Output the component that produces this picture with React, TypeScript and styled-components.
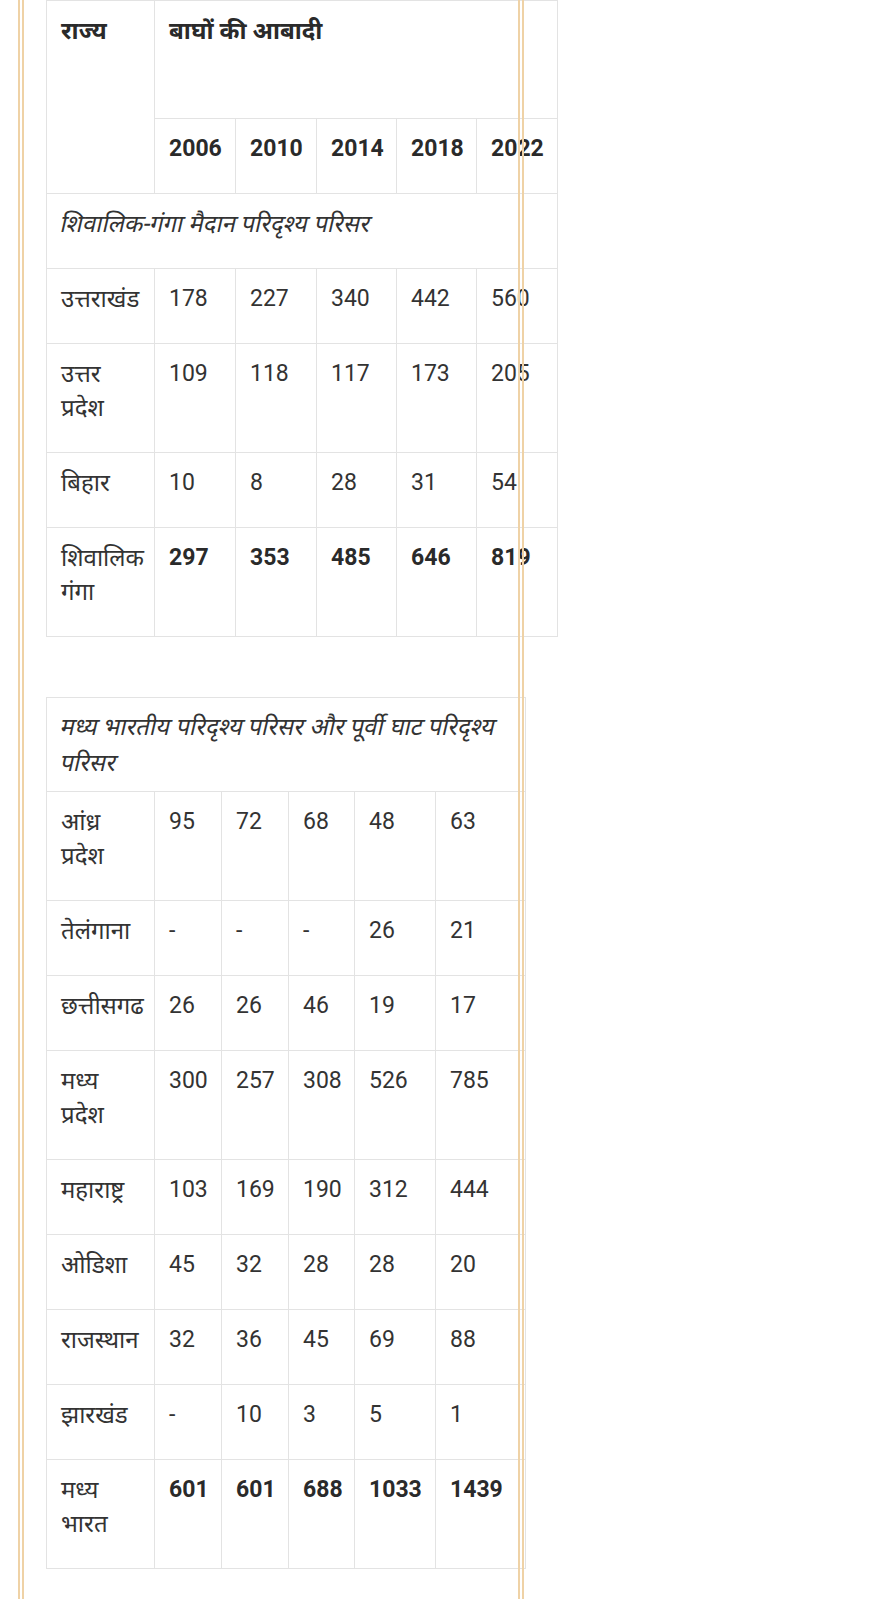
import React from "react";
import styled, { createGlobalStyle } from "styled-components";

const GlobalStyle = createGlobalStyle`
  html, body {
    margin: 0;
    padding: 0;
    background: #ffffff;
  }
  body {
    font-family: Roboto, "Noto Sans", "Liberation Sans", sans-serif;
    color: #333;
  }
`;

const Page = styled.div`
  padding-left: 18px;
  min-height: 1599px;
  overflow: hidden;
`;

// the page frame: two tan double rules that sit on top of the tables
const Frame = styled.div`
  position: relative;
  width: 506px;
  min-height: 1599px;
  box-sizing: border-box;
  padding-left: 28px;

  &::after {
    content: "";
    position: absolute;
    inset: 0;
    border-left: 6px double #efd2a6;
    border-right: 6px double #efd2a6;
    pointer-events: none;
    z-index: 2;
  }
`;

const Table = styled.table<{ $w: number; $gap?: number }>`
  width: ${(p) => p.$w}px;
  border-collapse: collapse;
  table-layout: fixed;
  margin-top: ${(p) => p.$gap ?? 0}px;
  font-size: 23px;
  line-height: 34px;
`;

const Col = styled.col<{ $w: number }>`
  width: ${(p) => p.$w}px;
`;

const Caption = styled.caption`
  caption-side: top;
  text-align: left;
  font-size: 24px;
  line-height: 36px;
  padding: 11px 14px 10px;
  border: 1px solid #e3e3e3;
  border-bottom: none;
  color: #333;
`;

const Cell = styled.td<{ $bold?: boolean; $deva?: boolean; $tall?: number }>`
  border: 1px solid #e3e3e3;
  vertical-align: top;
  text-align: left;
  padding: 13px 14px ${(p) => p.$tall ?? 27}px;
  font-size: ${(p) => (p.$deva ? 24 : 23)}px;
  font-weight: ${(p) => (p.$bold ? 700 : 400)};
  color: ${(p) => (p.$bold ? "#2a2a2a" : "#333")};
`;

const Head = styled(Cell).attrs({ as: "th" })``;

// Devanagari fallback has no italic face, so slant each word by hand
const SlantWord = styled.span`
  display: inline-block;
  transform: skewX(-13deg);
`;

const Slanted = ({ text }: { text: string }) => (
  <>
    {text.split(" ").map((w, i) => (
      <React.Fragment key={i}>
        {i > 0 && " "}
        <SlantWord>{w}</SlantWord>
      </React.Fragment>
    ))}
  </>
);

type Row = { state: string; values: string[]; bold?: boolean };

const years = ["2006", "2010", "2014", "2018", "2022"];

const shivalik: Row[] = [
  { state: "उत्तराखंड", values: ["178", "227", "340", "442", "560"] },
  { state: "उत्तर प्रदेश", values: ["109", "118", "117", "173", "205"] },
  { state: "बिहार", values: ["10", "8", "28", "31", "54"] },
  { state: "शिवालिक गंगा", values: ["297", "353", "485", "646", "819"], bold: true },
];

const central: Row[] = [
  { state: "आंध्र प्रदेश", values: ["95", "72", "68", "48", "63"] },
  { state: "तेलंगाना", values: ["-", "-", "-", "26", "21"] },
  { state: "छत्तीसगढ", values: ["26", "26", "46", "19", "17"] },
  { state: "मध्य प्रदेश", values: ["300", "257", "308", "526", "785"] },
  { state: "महाराष्ट्र", values: ["103", "169", "190", "312", "444"] },
  { state: "ओडिशा", values: ["45", "32", "28", "28", "20"] },
  { state: "राजस्थान", values: ["32", "36", "45", "69", "88"] },
  { state: "झारखंड", values: ["-", "10", "3", "5", "1"] },
  { state: "मध्य भारत", values: ["601", "601", "688", "1033", "1439"], bold: true },
];

const DataRows = ({ rows }: { rows: Row[] }) => (
  <>
    {rows.map((r) => (
      <tr key={r.state}>
        <Cell $deva>{r.state}</Cell>
        {r.values.map((v, i) => (
          <Cell key={i} $bold={r.bold}>
            {v}
          </Cell>
        ))}
      </tr>
    ))}
  </>
);

const firstCols = [108, 81, 81, 80, 80, 81];
const secondCols = [108, 67, 67, 66, 81, 90];

export default function App() {
  return (
    <>
      <GlobalStyle />
      <Page>
        <Frame>
          <Table $w={511}>
            <colgroup>
              {firstCols.map((w, i) => (
                <Col key={i} $w={w} />
              ))}
            </colgroup>
            <thead>
              <tr>
                <Head rowSpan={2} $bold $deva>
                  राज्य
                </Head>
                <Head colSpan={5} $bold $deva $tall={70}>
                  बाघों की आबादी
                </Head>
              </tr>
              <tr>
                {years.map((y) => (
                  <Head key={y} $bold>
                    {y}
                  </Head>
                ))}
              </tr>
            </thead>
            <tbody>
              <tr>
                <Cell colSpan={6} $deva>
                  <Slanted text="शिवालिक-गंगा मैदान परिदृश्य परिसर" />
                </Cell>
              </tr>
              <DataRows rows={shivalik} />
            </tbody>
          </Table>

          <Table $w={479} $gap={60}>
            <Caption>
              <Slanted text="मध्य भारतीय परिदृश्य परिसर और पूर्वी घाट परिदृश्य परिसर" />
            </Caption>
            <colgroup>
              {secondCols.map((w, i) => (
                <Col key={i} $w={w} />
              ))}
            </colgroup>
            <tbody>
              <DataRows rows={central} />
            </tbody>
          </Table>
        </Frame>
      </Page>
    </>
  );
}
